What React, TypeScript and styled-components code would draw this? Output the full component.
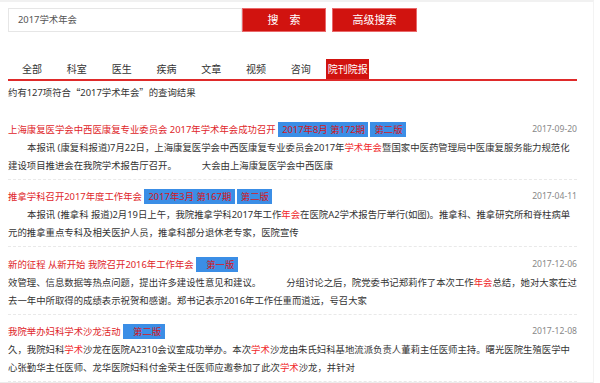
import React from "react";
import styled, { createGlobalStyle } from "styled-components";

const GlobalStyle = createGlobalStyle`
  html, body { margin: 0; padding: 0; background: #fff; }
  body { font-family: "Noto Sans", "Noto Sans CJK SC", sans-serif; }
`;

const Page = styled.div`
  box-sizing: border-box;
  width: 594px;
  height: 383px;
  overflow: hidden;
  border-top: 2px solid #f1f1f1;
  border-bottom: 1px solid #ececec;
  border-right: 1px solid #f3f3f3;
  padding: 0 16px 0 8px;
`;

const SearchRow = styled.div`
  display: flex;
  margin-top: 6px;
  height: 24px;
`;

const SearchInput = styled.div`
  box-sizing: border-box;
  width: 234px;
  height: 24px;
  border: 1px solid #e6e6e6;
  padding: 0 9px;
  font-size: 9.4px;
  line-height: 22px;
  color: #555;
`;

const RedButton = styled.div<{ $w: number; $ml: number }>`
  box-sizing: border-box;
  width: ${(p) => p.$w}px;
  margin-left: ${(p) => p.$ml}px;
  height: 24px;
  background: #d1130f;
  border: 1px solid #e9686a;
  color: #fff;
  font-size: 11px;
  line-height: 22px;
  text-align: center;
`;

const TabBar = styled.div`
  display: flex;
  margin-top: 27px;
  height: 20px;
  border-bottom: 2px solid #df2a2a;
  padding-left: 1.7px;
`;

const Tab = styled.div<{ $active?: boolean }>`
  font-size: 10px;
  line-height: 20px;
  padding: ${(p) => (p.$active ? "0 1.5px" : "0 12.4px")};
  margin-left: ${(p) => (p.$active ? "3px" : "0")};
  color: ${(p) => (p.$active ? "#fff" : "#333")};
  background: ${(p) => (p.$active ? "#d1130f" : "transparent")};
`;

const ResultLine = styled.div`
  margin-top: 2px;
  font-size: 9.4px;
  line-height: 18px;
  color: #333;
`;

const CjkPunct = styled.span`
  font-family: "Noto Sans CJK SC", sans-serif;
`;

const List = styled.div`
  margin-top: 10px;
`;

const Item = styled.div`
  padding: 7.5px 0 4px;
  border-bottom: 1px dashed #e9e9e9;
`;

const TitleRow = styled.div`
  display: flex;
  align-items: center;
  height: 19px;
  white-space: nowrap;
`;

const Title = styled.span`
  font-size: 9.4px;
  line-height: 15px;
  color: #e0262a;
  margin-right: 2.5px;
`;

const Badge = styled.span<{ $pl?: number }>`
  display: inline-block;
  height: 15px;
  line-height: 15px;
  font-size: 9.4px;
  padding: 0 3.5px 0 ${(p) => p.$pl ?? 4}px;
  margin-right: 2px;
  background: #3b8ee6;
  color: #d4171c;
`;

const DateText = styled.span`
  margin-left: auto;
  font-size: 8.6px;
  line-height: 15px;
  color: #888;
`;

const Body = styled.div<{ $indent?: number }>`
  font-size: 9.4px;
  line-height: 18px;
  height: 36px;
  overflow: hidden;
  color: #333;
  text-indent: ${(p) => p.$indent ?? 0}px;
`;

const Hl = styled.span`
  color: #f0282a;
`;

const Gap = styled.span<{ $w: number }>`
  display: inline-block;
  width: ${(p) => p.$w}px;
`;

const tabs = ["全部", "科室", "医生", "疾病", "文章", "视频", "咨询"];

export default function App() {
  return (
    <>
      <GlobalStyle />
      <Page>
        <SearchRow>
          <SearchInput>2017学术年会</SearchInput>
          <RedButton $w={84} $ml={0}>搜　索</RedButton>
          <RedButton $w={85} $ml={6}>高级搜索</RedButton>
        </SearchRow>
        <TabBar>
          {tabs.map((t) => (
            <Tab key={t}>{t}</Tab>
          ))}
          <Tab $active>院刊院报</Tab>
        </TabBar>
        <ResultLine>
          约有127项符合<CjkPunct>“</CjkPunct>2017学术年会<CjkPunct>”</CjkPunct>的查询结果
        </ResultLine>
        <List>
          <Item>
            <TitleRow>
              <Title>上海康复医学会中西医康复专业委员会 2017年学术年会成功召开</Title>
              <Badge>2017年8月 第172期</Badge>
              <Badge>第二版</Badge>
              <DateText>2017-09-20</DateText>
            </TitleRow>
            <Body $indent={19}>
              本报讯 (康复科报道)7月22日，上海康复医学会中西医康复专业委员会2017年<Hl>学术年会</Hl>暨国家中医药管理局中医康复服务能力规范化建设项目推进会在我院学术报告厅召开。<Gap $w={25} />大会由上海康复医学会中西医康
            </Body>
          </Item>
          <Item>
            <TitleRow>
              <Title>推拿学科召开2017年度工作年会</Title>
              <Badge>2017年3月 第167期</Badge>
              <Badge>第二版</Badge>
              <DateText>2017-04-11</DateText>
            </TitleRow>
            <Body $indent={19}>
              本报讯 (推拿科 报道)2月19日上午，我院推拿学科2017年工作<Hl>年会</Hl>在医院A2学术报告厅举行(如图)。推拿科、推拿研究所和脊柱病单元的推拿重点专科及相关医护人员，推拿科部分退休老专家，医院宣传
            </Body>
          </Item>
          <Item>
            <TitleRow>
              <Title>新的征程 从新开始 我院召开2016年工作年会</Title>
              <Badge $pl={10}>第一版</Badge>
              <DateText>2017-12-06</DateText>
            </TitleRow>
            <Body>
              效管理、信息数据等热点问题，提出许多建设性意见和建议。<Gap $w={25} />分组讨论之后，院党委书记郑莉作了本次工作<Hl>年会</Hl>总结，她对大家在过去一年中所取得的成绩表示祝贺和感谢。郑书记表示2016年工作任重而道远，号召大家
            </Body>
          </Item>
          <Item>
            <TitleRow>
              <Title>我院举办妇科学术沙龙活动</Title>
              <Badge $pl={10}>第二版</Badge>
              <DateText>2017-12-08</DateText>
            </TitleRow>
            <Body>
              久，我院妇科<Hl>学术</Hl>沙龙在医院A2310会议室成功举办。本次<Hl>学术</Hl>沙龙由朱氏妇科基地流派负责人董莉主任医师主持。曙光医院生殖医学中心张勤华主任医师、龙华医院妇科付金荣主任医师应邀参加了此次<Hl>学术</Hl>沙龙，并针对
            </Body>
          </Item>
        </List>
      </Page>
    </>
  );
}
